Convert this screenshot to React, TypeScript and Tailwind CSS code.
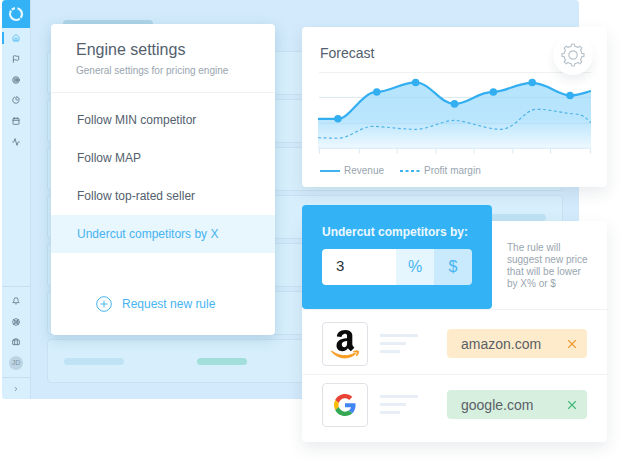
import React from "react";
import {
  Activity, Bell, Briefcase, Calendar, ChevronRight, Flag, House, LifeBuoy, PieChart, Target, X,
} from "lucide-react";

const mainNav = [
  { label: "Home", Icon: House, active: true },
  { label: "Flags", Icon: Flag },
  { label: "Targets", Icon: Target },
  { label: "Reports", Icon: PieChart },
  { label: "Calendar", Icon: Calendar },
  { label: "Activity", Icon: Activity },
];

const footerNav = [
  { label: "Notifications", Icon: Bell },
  { label: "Support", Icon: LifeBuoy },
  { label: "Workspace", Icon: Briefcase },
];

const rules = ["Follow MIN competitor", "Follow MAP", "Follow top-rated seller", "Undercut competitors by X"];

function Sidebar() {
  return (
    <nav className="flex w-[29px] shrink-0 flex-col border-r border-[#c9e2f3] bg-[#d8f0fe] text-[#5b7486]">
      <div className="flex h-7 items-center justify-center bg-[#33b3f5]">
        <svg viewBox="0 0 16 16" className="size-4" fill="none" stroke="#e4f6ff" strokeWidth="2.2">
          <path d="M9.5 2.2A6 6 0 0 1 12.7 11.7" />
          <path d="M11.8 12.6A6 6 0 0 1 3 4.7" />
          <path d="M3.8 3.8A6 6 0 0 1 7 2.1" />
        </svg>
      </div>
      <div className="flex h-[124px] flex-col">
        {mainNav.map(({ label, Icon, active }) => (
          <button
            key={label}
            aria-label={label}
            className={
              active
                ? "flex flex-1 items-center text-[#4bb8f3]"
                : "flex flex-1 items-center"
            }
          >
            <span className={active ? "h-3 w-0.5 bg-[#33b3f5]" : "h-3 w-0.5"} />
            <Icon className="ml-2 size-2" strokeWidth={2.5} />
          </button>
        ))}
      </div>
      <div className="mt-auto flex h-[91px] flex-col border-t border-[#c4dff0] py-1">
        {footerNav.map(({ label, Icon }) => (
          <button key={label} aria-label={label} className="flex flex-1 items-center justify-center">
            <Icon className="size-2" strokeWidth={2.5} />
          </button>
        ))}
        <button className="flex flex-1 items-center justify-center">
          <span className="flex size-3.5 items-center justify-center rounded-full bg-[#bcd4e4] text-[7px] leading-none text-[#7d95a6]">
            JD
          </span>
        </button>
      </div>
      <button aria-label="Expand" className="flex h-[22px] items-center justify-center border-t border-[#c4dff0]">
        <ChevronRight className="size-1.5" strokeWidth={3} />
      </button>
    </nav>
  );
}

function Backdrop() {
  return (
    <div className="col-start-1 row-start-1 mr-[52px] ml-0.5 flex self-start overflow-hidden rounded bg-[#d2eafb]">
      <Sidebar />
      <div className="flex-1 px-4 pt-5 pb-4">
        <div className="ml-4 h-2 w-[90px] rounded-sm bg-[#afd4e8]" />
        <div className="mt-[23px] flex flex-col gap-1">
          {[0, 1, 2, 3, 4, 5, 6].map((row) => (
            <div
              key={row}
              className="flex h-11 items-center rounded border border-[#c8e1f1] bg-[#d7effc] px-4"
            >
              {row === 3 && <span className="ml-auto h-[7px] w-[60px] rounded-full bg-[#bee1f3]" />}
              {row === 6 && (
                <>
                  <span className="h-[7px] w-[60px] rounded-full bg-[#bfe3f4]" />
                  <span className="ml-[73px] h-[7px] w-[50px] rounded-full bg-[#a2dfda]" />
                </>
              )}
            </div>
          ))}
        </div>
      </div>
    </div>
  );
}

function EngineSettings() {
  return (
    <section className="w-[224px] shrink-0 self-start rounded bg-white pb-[21px] shadow-[0_4px_14px_rgba(40,110,150,0.22)]">
      <header className="border-b border-[#f0f2f4] px-[25px] pt-4 pb-3.5">
        <h1 className="text-base leading-5 text-[#53606d]">Engine settings</h1>
        <p className="mt-1 text-[10px] leading-3.5 whitespace-nowrap text-[#99a5af]">
          General settings for pricing engine
        </p>
      </header>
      <ul className="pt-2">
        {rules.map((rule, i) => (
          <li key={rule}>
            <button
              className={
                i === 3
                  ? "h-[38px] w-full bg-[#e8f6fe] px-[26px] text-left text-xs text-[#46b4f0]"
                  : "h-[38px] w-full px-[26px] text-left text-xs text-[#53606d]"
              }
            >
              {rule}
            </button>
          </li>
        ))}
      </ul>
      <button className="mt-[41px] ml-[45px] flex h-5 items-center gap-2.5 text-xs text-[#46b4f0]">
        <svg viewBox="0 0 16 16" className="size-4" fill="none" stroke="currentColor">
          <circle cx="8" cy="8" r="7.3" />
          <path d="M8 4.5v7M4.5 8h7" />
        </svg>
        Request new rule
      </button>
    </section>
  );
}

const revenue =
  "M0 47H20C32 47 44 20 59 20C72 20 84 10.500 98 10.500C113 10.500 122 32 137 32C151 32 160 20 176 20C188 20 200 11 215 11C230 11 241 23.500 253 23.500C262 23.500 267 21 274 19";
const points = [[20, 47], [59, 20], [98, 10.5], [137, 32], [176, 20], [215, 10.5], [253, 23.5]];

function ForecastChart() {
  return (
    <svg viewBox="0 0 274 84" className="block w-full" role="img" aria-label="Revenue and profit margin">
      <defs>
        <linearGradient id="area" x1="0" y1="0" x2="0" y2="1">
          <stop offset="0" stopColor="#b5e4fd" />
          <stop offset="0.55" stopColor="#b9e5fd" />
          <stop offset="1" stopColor="#eff9ff" />
        </linearGradient>
      </defs>
      <path d="M1 .5H274M1 25.500H274M1 51.500H274" stroke="#eff2f4" />
      <path d={`${revenue}V77H0Z`} fill="url(#area)" />
      <path d="M1 25.500H274M1 51.500H274" stroke="#7bbfe0" strokeOpacity=".18" />
      <path
        d="M0 76.500H274M1.500 77V82M41.500 77V82M79.500 77V82M118.500 77V82M156.500 77V82M195.500 77V82M233.500 77V82M273.500 77V82"
        stroke="#d9eaf4"
      />
      <path
        d="M0 66L20 66.500C32 66.500 42 55 55 54.500C70 55 84 57.500 98 57.500C111 57.500 124 49 137 48.500C150 49 168 57.500 183 57.500C199 57.500 206 38 219 37.500C232 37 242 41 257 42C266 42.500 269 46 274 51"
        fill="none"
        stroke="#50b4e8"
        strokeWidth="1.2"
        strokeDasharray="3 2.500"
      />
      <path d={revenue} fill="none" stroke="#33aef0" strokeWidth="2.2" />
      {points.map(([x, y]) => (
        <circle key={x} cx={x} cy={y} r="3.800" fill="#33aef0" />
      ))}
    </svg>
  );
}

function GearIcon() {
  return (
    <svg viewBox="0 0 24 24" className="size-6" fill="none" stroke="#b9c3cb" strokeWidth="1.2" strokeLinejoin="round">
      <circle cx="12" cy="12" r="4.200" />
      <path d="M10.300 3.200L10.700 1H13.300L13.700 3.200Q15.300 3.500 16.900 4.500L18.800 3.200L20.800 5.200L19.500 7.100Q20.500 8.700 20.800 10.300L23 10.700V13.300L20.800 13.700Q20.500 15.300 19.500 16.900L20.800 18.800L18.800 20.800L16.900 19.500Q15.300 20.500 13.700 20.800L13.300 23H10.700L10.300 20.800Q8.700 20.500 7.100 19.500L5.200 20.800L3.200 18.800L4.500 16.900Q3.500 15.300 3.200 13.700L1 13.300V10.700L3.200 10.300Q3.500 8.700 4.500 7.100L3.200 5.200L5.200 3.200L7.100 4.500Q8.700 3.500 10.300 3.200Z" />
    </svg>
  );
}

function Forecast() {
  return (
    <section className="relative rounded bg-white px-4 pt-4 pb-[9px] shadow-[0_6px_16px_rgba(40,60,80,0.1)]">
      <h2 className="mb-[9px] ml-0.5 text-sm leading-5 text-[#53606d]">Forecast</h2>
      <ForecastChart />
      <div className="mt-2 flex h-3.5 items-center text-[10px] whitespace-nowrap text-[#99a5af]">
        <span className="mr-1 ml-0.5 h-0.5 w-5 bg-[#40b2f0]" />
        Revenue
        <svg viewBox="0 0 20 2" className="mr-1 ml-4 h-0.5 w-5">
          <path d="M0 1H20" stroke="#40b2f0" strokeWidth="2" strokeDasharray="3 2.500" />
        </svg>
        Profit margin
      </div>
      <button
        aria-label="Forecast settings"
        className="absolute top-2 right-3.5 flex size-10 items-center justify-center rounded-full bg-white shadow-[0_6px_10px_rgba(40,60,80,0.08)]"
      >
        <GearIcon />
      </button>
    </section>
  );
}

function AmazonLogo() {
  return (
    <svg viewBox="0 0 448 512" className="size-8" role="img" aria-label="Amazon">
      <path
        fill="#0b0b0b"
        d="M257.2 162.7c-48.7 1.8-169.5 15.5-169.5 117.5 0 109.5 138.3 114 183.500 43.2 6.500 10.200 35.400 37.500 45.300 46.800l56.800-56S341 288.900 341 261.400V114.300C341 89 316.500 32 228.700 32 140.700 32 94 87 94 136.300l73.500 6.800c16.300-49.500 54.200-49.500 54.200-49.500 40.700-.1 35.500 29.800 35.500 69.100zm0 86.800c0 80-84.200 68-84.200 17.200 0-47.200 50.500-56.700 84.200-57.800v40.600z"
      />
      <path
        fill="#f79a1c"
        stroke="#f79a1c"
        strokeWidth="12"
        d="M393.2 413c-7.700 10-70 67-174.500 67S34.200 408.500 9.700 379c-6.800-7.700 1-11.300 5.500-8.300C88.500 415.200 203 488.500 387.700 401c7.500-3.700 13.300 2 5.500 12zm39.800 2.200c-6.500 15.800-16 26.800-21.200 31-5.500 4.500-9.500 2.700-6.500-3.800s19.300-46.500 12.700-55c-6.500-8.300-37-4.300-48-3.200-10.800 1-13 2-14-.3-2.300-5.700 21.700-15.500 37.500-17.500 15.700-1.800 41-.8 46 5.700 3.700 5.100 0 27.100-6.500 43.100z"
      />
    </svg>
  );
}

function GoogleLogo() {
  return (
    <svg viewBox="0 0 48 48" className="size-[22px]" role="img" aria-label="Google">
      <path fill="#EA4335" d="M24 9.500c3.540 0 6.710 1.220 9.210 3.600l6.850-6.850C35.900 2.380 30.470 0 24 0 14.620 0 6.510 5.380 2.560 13.220l7.980 6.190C12.430 13.720 17.740 9.500 24 9.500z" />
      <path fill="#4285F4" d="M46.980 24.550c0-1.570-.15-3.090-.38-4.550H24v9.020h12.940c-.58 2.960-2.260 5.480-4.780 7.180l7.730 6c4.510-4.180 7.090-10.360 7.090-17.650z" />
      <path fill="#FBBC05" d="M10.530 28.590c-.48-1.450-.76-2.990-.76-4.590s.27-3.140.76-4.590l-7.980-6.190C.92 16.460 0 20.120 0 24c0 3.880.92 7.540 2.560 10.780l7.970-6.190z" />
      <path fill="#34A853" d="M24 48c6.480 0 11.930-2.130 15.890-5.810l-7.730-6c-2.150 1.450-4.920 2.300-8.160 2.300-6.260 0-11.570-4.220-13.470-9.910l-7.980 6.190C6.510 42.620 14.620 48 24 48z" />
    </svg>
  );
}

interface CompetitorProps {
  domain: string;
  logo: React.ReactNode;
  tagClass: string;
  crossClass: string;
}

function Competitor({ domain, logo, tagClass, crossClass }: CompetitorProps) {
  return (
    <li className="flex items-center border-t border-[#f0f2f4] px-5 py-2 first:pt-3">
      <span className="flex h-11 w-[46px] shrink-0 items-center justify-center rounded-sm border border-[#dfe3e8]">
        {logo}
      </span>
      <span className="ml-3 flex flex-col gap-[5px]">
        <span className="h-[3px] w-[38px] bg-[#e7eef6]" />
        <span className="h-[3px] w-[26px] bg-[#e7eef6]" />
        <span className="h-[3px] w-5 bg-[#e7eef6]" />
      </span>
      <span className={tagClass}>
        {domain}
        <button aria-label={`Remove ${domain}`} className={crossClass}>
          <X className="size-3.5" strokeWidth={2} />
        </button>
      </span>
    </li>
  );
}

function Undercut() {
  return (
    <section className="mt-[34px] rounded bg-white pb-[7px] shadow-[0_6px_16px_rgba(40,60,80,0.1)]">
      <div className="flex">
        <div className="-mt-4 w-[190px] shrink-0 rounded bg-[#33b3f5] px-5 pt-[19px] pb-6">
          <label htmlFor="amount" className="block text-xs leading-4 font-bold whitespace-nowrap text-[#eef9ff]">
            Undercut competitors by:
          </label>
          <div className="mt-[9px] flex h-9 overflow-hidden rounded">
            <input
              id="amount"
              defaultValue="3"
              className="w-[74px] min-w-0 bg-white pl-3.5 text-[15px] text-[#2b3138] outline-none"
            />
            <button className="flex-1 bg-[#e6f6fe] text-base text-[#46b4f0]">%</button>
            <button className="flex-1 bg-[#c8eafc] text-base text-[#46b4f0]">$</button>
          </div>
        </div>
        <p className="flex-1 pt-[21px] pr-4 pl-[15px] text-[10px] leading-3 text-[#99a5af]">
          The rule will suggest new price that will be lower by&nbsp;X% or $
        </p>
      </div>
      <ul>
        <Competitor
          domain="amazon.com"
          logo={<AmazonLogo />}
          tagClass="ml-auto flex h-[29px] w-[140px] items-center justify-between rounded bg-[#fdebcb] pr-2 pl-3.5 text-sm text-[#5b5f66]"
          crossClass="text-[#ee9a35]"
        />
        <Competitor
          domain="google.com"
          logo={<GoogleLogo />}
          tagClass="ml-auto flex h-[29px] w-[140px] items-center justify-between rounded bg-[#d6efdf] pr-2 pl-3.5 text-sm text-[#5b5f66]"
          crossClass="text-[#46b978]"
        />
      </ul>
    </section>
  );
}

export default function App() {
  return (
    <main className="grid bg-white font-['Liberation_Sans',Arial,sans-serif]">
      <Backdrop />
      <div className="z-10 col-start-1 row-start-1 flex gap-[27px] pt-6 pr-6 pb-8 pl-[51px]">
        <EngineSettings />
        <div className="min-w-0 flex-1 pt-[3px]">
          <Forecast />
          <Undercut />
        </div>
      </div>
    </main>
  );
}
